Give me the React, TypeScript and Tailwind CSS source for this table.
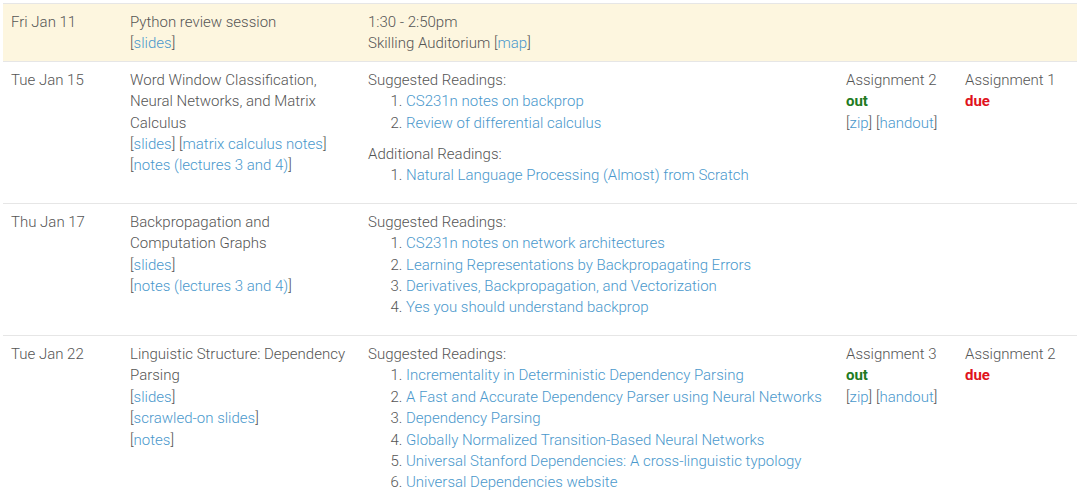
import type { ReactNode } from 'react';

type Reading = { title: string };

interface Lecture {
  date: string;
  highlight?: boolean;
  desc: ReactNode;
  readings?: ReactNode;
  out?: string;
  due?: string;
}

function A({ children }: { children: ReactNode }) {
  return <a className="text-[#4a98cc]">{children}</a>;
}

function Bracket({ children }: { children: ReactNode }) {
  return (
    <>
      [<A>{children}</A>]
    </>
  );
}

function ReadingList({ label, items }: { label: string; items: Reading[] }) {
  return (
    <>
      <div>{label}</div>
      <ol className="list-decimal pl-[38px] mb-[10px]">
        {items.map((r) => (
          <li key={r.title}>
            <A>{r.title}</A>
          </li>
        ))}
      </ol>
    </>
  );
}

const lectures: Lecture[] = [
  {
    date: 'Fri Jan 11',
    highlight: true,
    desc: (
      <>
        Python review session
        <br />
        <Bracket>slides</Bracket>
      </>
    ),
    readings: (
      <>
        1:30 - 2:50pm
        <br />
        Skilling Auditorium <Bracket>map</Bracket>
      </>
    ),
  },
  {
    date: 'Tue Jan 15',
    desc: (
      <>
        Word Window Classification, Neural Networks, and Matrix Calculus
        <br />
        <Bracket>slides</Bracket> <Bracket>matrix calculus notes</Bracket>
        <br />
        <Bracket>notes (lectures 3 and 4)</Bracket>
      </>
    ),
    readings: (
      <>
        <ReadingList
          label="Suggested Readings:"
          items={[{ title: 'CS231n notes on backprop' }, { title: 'Review of differential calculus' }]}
        />
        <ReadingList
          label="Additional Readings:"
          items={[{ title: 'Natural Language Processing (Almost) from Scratch' }]}
        />
      </>
    ),
    out: 'Assignment 2',
    due: 'Assignment 1',
  },
  {
    date: 'Thu Jan 17',
    desc: (
      <>
        Backpropagation and Computation Graphs
        <br />
        <Bracket>slides</Bracket>
        <br />
        <Bracket>notes (lectures 3 and 4)</Bracket>
      </>
    ),
    readings: (
      <ReadingList
        label="Suggested Readings:"
        items={[
          { title: 'CS231n notes on network architectures' },
          { title: 'Learning Representations by Backpropagating Errors' },
          { title: 'Derivatives, Backpropagation, and Vectorization' },
          { title: 'Yes you should understand backprop' },
        ]}
      />
    ),
  },
  {
    date: 'Tue Jan 22',
    desc: (
      <>
        Linguistic Structure: Dependency Parsing
        <br />
        <Bracket>slides</Bracket>
        <br />
        <Bracket>scrawled-on slides</Bracket>
        <br />
        <Bracket>notes</Bracket>
      </>
    ),
    readings: (
      <ReadingList
        label="Suggested Readings:"
        items={[
          { title: 'Incrementality in Deterministic Dependency Parsing' },
          { title: 'A Fast and Accurate Dependency Parser using Neural Networks' },
          { title: 'Dependency Parsing' },
          { title: 'Globally Normalized Transition-Based Neural Networks' },
          { title: 'Universal Stanford Dependencies: A cross-linguistic typology' },
          { title: 'Universal Dependencies website' },
        ]}
      />
    ),
    out: 'Assignment 3',
    due: 'Assignment 2',
  },
];

export default function App() {
  return (
    <div className="bg-white h-[503px] overflow-hidden pt-[3px] px-[3px] font-['Roboto',sans-serif] font-light text-[15px] leading-[21.4px] text-[#555]">
      <table className="w-[1074px] table-fixed border-collapse">
        <colgroup>
          <col className="w-[119px]" />
          <col className="w-[238px]" />
          <col className="w-[478px]" />
          <col className="w-[119px]" />
          <col className="w-[120px]" />
        </colgroup>
        <tbody>
          {lectures.map((l) => (
            <tr
              key={l.date}
              className={`border-t border-[#e6e6e6] align-top ${l.highlight ? 'bg-[#fdf6df]' : ''}`}
            >
              <td className="px-2 pt-[8px] pb-[6px]">{l.date}</td>
              <td className="px-2 pt-[8px] pb-[6px]">{l.desc}</td>
              <td className="px-2 pt-[8px] pb-[6px]">{l.readings}</td>
              <td className="px-2 pt-[8px] pb-[6px]">
                {l.out && (
                  <>
                    {l.out}
                    <br />
                    <b className="font-bold text-[#217a21]">out</b>
                    <br />
                    <Bracket>zip</Bracket> <Bracket>handout</Bracket>
                  </>
                )}
              </td>
              <td className="px-2 pt-[8px] pb-[6px]">
                {l.due && (
                  <>
                    {l.due}
                    <br />
                    <b className="font-bold text-[#e0121c]">due</b>
                  </>
                )}
              </td>
            </tr>
          ))}
        </tbody>
      </table>
    </div>
  );
}
